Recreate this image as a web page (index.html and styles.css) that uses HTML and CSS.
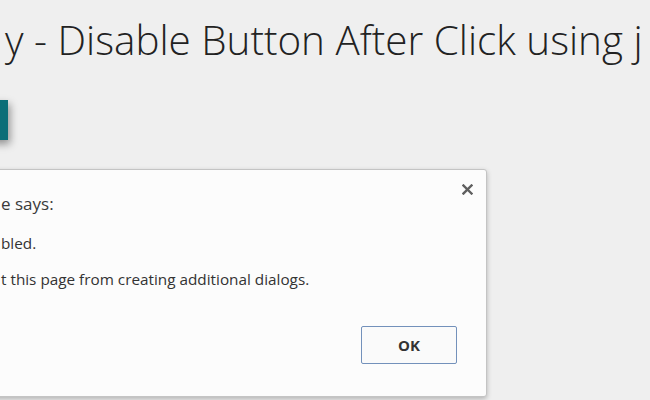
FILE: index.html
```html
<!DOCTYPE html>
<html lang="en">
<head>
<meta charset="utf-8">
<title>Disable Button After Click</title>
<link rel="stylesheet" href="styles.css">
</head>
<body>
<div class="page">
  <h1 class="title">y - Disable Button After Click using j</h1>
  <button class="action" type="button" aria-label="Disable on Click"></button>
  <div class="dialog" role="alertdialog">
    <div class="dialog-head">
      <div class="dialog-title">e says:</div>
      <button class="close" type="button" aria-label="Close">
        <svg width="11" height="11" viewBox="0 0 11 11"><path d="M1.5 1.5 L9.5 9.5 M9.5 1.5 L1.5 9.5" stroke="#5f5f5f" stroke-width="2.4" stroke-linecap="square" fill="none"/></svg>
      </button>
    </div>
    <div class="dialog-msg">bled.</div>
    <div class="dialog-check">t this page from creating additional dialogs.</div>
    <div class="dialog-foot">
      <button class="ok" type="button">OK</button>
    </div>
  </div>
</div>
</body>
</html>
```
FILE: styles.css
```css
html, body {
  margin: 0;
  padding: 0;
}
body {
  width: 650px;
  height: 400px;
  overflow: hidden;
  background: #efefef;
  font-family: "Open Sans", "DejaVu Sans", sans-serif;
  color: #333;
}
.page {
  padding-top: 20px;
}
.title {
  margin: 0 0 0 5px;
  font-family: "Open Sans", "DejaVu Sans", sans-serif;
  font-weight: 300;
  font-size: 40.4px;
  line-height: 40px;
  white-space: nowrap;
  color: #222;
}
.action {
  display: block;
  margin: 40px 0 0 -120px;
  width: 128px;
  height: 40px;
  border: 0;
  padding: 0;
  background: #0b6e78;
  box-shadow: 2px 4px 8px rgba(0, 0, 0, 0.4);
}
.dialog {
  box-sizing: border-box;
  margin: 29px 0 0 -20px;
  width: 507px;
  height: 228px;
  background: #fcfcfc;
  border: 1px solid #c4c4c4;
  border-radius: 3px;
  box-shadow: 0 2px 5px rgba(0, 0, 0, 0.25);
  padding: 22px 13px 32px 20px;
  display: flex;
  flex-direction: column;
}
.dialog-head {
  display: flex;
  justify-content: space-between;
  align-items: flex-start;
}
.dialog-title {
  font-size: 17px;
  line-height: 24px;
  color: #3a3a3a;
  white-space: nowrap;
}
.close {
  margin-top: -8px;
  border: 0;
  padding: 0;
  background: none;
  width: 11px;
  height: 11px;
  display: flex;
}
.dialog-msg {
  margin-top: 17px;
  font-size: 15.3px;
  line-height: 20px;
  color: #333;
  white-space: nowrap;
}
.dialog-check {
  margin-top: 16px;
  font-size: 15.3px;
  line-height: 20px;
  color: #333;
  white-space: nowrap;
}
.dialog-foot {
  margin-top: auto;
  display: flex;
  justify-content: flex-end;
  padding-right: 16px;
}
.ok {
  box-sizing: border-box;
  width: 96px;
  height: 38px;
  border: 1px solid #7391bb;
  border-radius: 2px;
  background: #fafafa;
  font-family: "Open Sans", "DejaVu Sans", sans-serif;
  font-weight: 700;
  font-size: 15px;
  color: #333;
}
```
